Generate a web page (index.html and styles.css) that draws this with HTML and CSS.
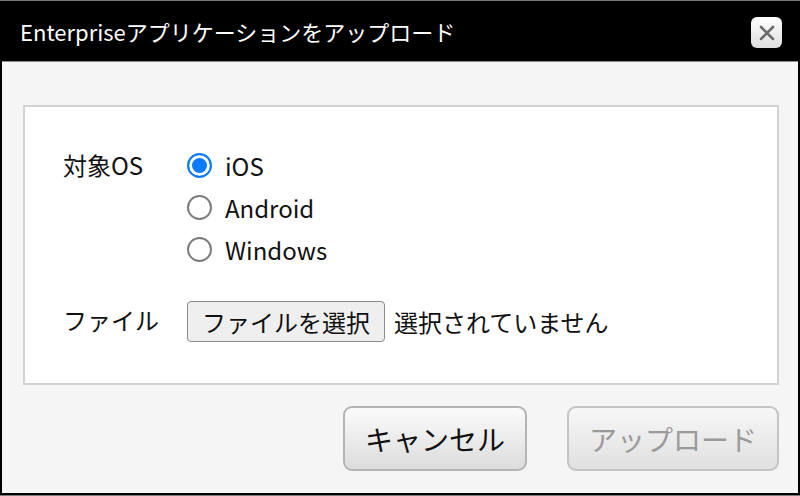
FILE: index.html
```html
<!DOCTYPE html>
<html lang="ja">
<head>
    <meta charset="UTF-8">
    <meta name="viewport" content="width=device-width, initial-scale=1.0">
    <title>アップロード</title>
    <link rel="stylesheet" href="styles.css">
</head>
<body>
    <div class="dialog">
        <div class="titlebar">
            <h1>Enterpriseアプリケーションをアップロード</h1>
            <button class="close-btn" aria-label="閉じる">
                <svg width="18" height="18" viewBox="0 0 18 18">
                    <path d="M3 3 L15 15 M15 3 L3 15" stroke="#6a6a6a" stroke-width="2.6" stroke-linecap="round"/>
                </svg>
            </button>
        </div>

        <div class="dialog-body">
            <div class="panel">
                <div class="form-row">
                    <span class="form-label">対象OS</span>
                    <div class="radio-group">
                        <label class="radio"><input type="radio" name="os" checked><span>iOS</span></label>
                        <label class="radio"><input type="radio" name="os"><span>Android</span></label>
                        <label class="radio"><input type="radio" name="os"><span>Windows</span></label>
                    </div>
                </div>
                <div class="form-row file-row">
                    <span class="form-label">ファイル</span>
                    <div class="file-pick">
                        <button class="file-btn">ファイルを選択</button>
                        <span class="file-name">選択されていません</span>
                    </div>
                </div>
            </div>

            <div class="actions">
                <button class="action-btn">キャンセル</button>
                <button class="action-btn upload" disabled>アップロード</button>
            </div>
        </div>
    </div>
</body>
</html>
```

FILE: styles.css
```css
/* Upload dialog */
body {
    margin: 0;
    background-color: #7a7a7a;
    font-family: "Noto Sans CJK JP", "Noto Sans", sans-serif;
    color: #111;
}

.dialog {
    margin-top: 1px;
    height: 494px;
    box-sizing: border-box;
    border: 2px solid #000;
    border-top: none;
    background-color: #f5f5f5;
    display: flex;
    flex-direction: column;
}

.titlebar {
    height: 60px;
    background-color: #000;
    border-bottom: 1px solid #8a8a8a;
    display: flex;
    align-items: center;
    justify-content: space-between;
    padding: 0 16px 0 18px;
}

.titlebar h1 {
    margin: 0;
    color: #fff;
    font-size: 22px;
    font-weight: normal;
}

.close-btn {
    width: 31px;
    height: 31px;
    padding: 0;
    border: none;
    border-radius: 6px;
    background: linear-gradient(#ffffff, #dedede);
    display: flex;
    align-items: center;
    justify-content: center;
    margin-top: 3px;
}

.dialog-body {
    flex: 1;
    padding: 43px 19px 0 21px;
}

.panel {
    background-color: #fff;
    border: 2px solid #d2d2d2;
    padding: 37px 0 41px 38px;
    font-size: 24px;
}

.form-row {
    display: grid;
    grid-template-columns: 124px 1fr;
}

.form-label {
    line-height: 42px;
}

.radio-group {
    display: flex;
    flex-direction: column;
}

.radio {
    height: 42px;
    display: flex;
    align-items: center;
    gap: 13px;
}

.radio input {
    appearance: none;
    margin: 0;
    width: 25px;
    height: 25px;
    border: 2px solid #7b7b7b;
    border-radius: 50%;
    background-color: #fff;
}

.radio input:checked {
    border: 2px solid #0a7aff;
    box-shadow: inset 0 0 0 3px #fff;
    background-color: #0a7aff;
}

.file-row {
    margin-top: 31px;
}

.file-row .form-label {
    line-height: 38px;
}

.file-pick {
    display: flex;
    align-items: center;
    gap: 9px;
}

.file-btn {
    font-family: inherit;
    font-size: 24px;
    height: 41px;
    padding: 0 14px;
    border: 1px solid #8a8a8a;
    border-radius: 4px;
    background-color: #efefef;
    color: #111;
}

.actions {
    display: flex;
    justify-content: flex-end;
    gap: 40px;
    margin-top: 21px;
}

.action-btn {
    font-family: inherit;
    font-size: 28px;
    height: 65px;
    padding: 0 20px;
    border: 2px solid #b4b4b4;
    border-radius: 9px;
    background: linear-gradient(#fbfbfb, #dcdcdc);
    color: #111;
}

.action-btn.upload {
    color: #9a9a9a;
    border-color: #c4c4c4;
    background: linear-gradient(#f7f7f7, #e0e0e0);
}
```
